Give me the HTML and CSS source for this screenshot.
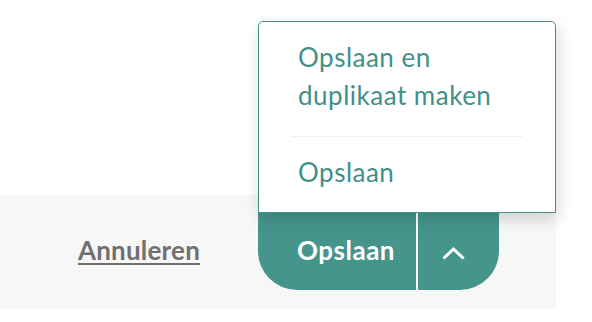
FILE: index.html
```html
<!DOCTYPE html>
<html lang="nl">
<head>
<meta charset="utf-8">
<title>Opslaan</title>
<link rel="stylesheet" href="styles.css">
</head>
<body>
  <div class="content"></div>
  <div class="footer">
    <a class="cancel" href="#">Annuleren</a>
    <div class="split">
      <div class="menu">
        <div class="menu-item">Opslaan en<br>duplikaat maken</div>
        <div class="menu-divider"></div>
        <div class="menu-item">Opslaan</div>
      </div>
      <button class="split-main" type="button">Opslaan</button>
      <span class="split-sep"></span>
      <button class="split-toggle" type="button" aria-label="Meer opties">
        <svg width="24" height="14" viewBox="0 0 24 14" aria-hidden="true">
          <path d="M2.5 11.5 L11.5 3 L20.5 11.5" fill="none" stroke="#ffffff" stroke-width="3" stroke-linecap="square" stroke-linejoin="miter"/>
        </svg>
      </button>
    </div>
  </div>
</body>
</html>
```
FILE: styles.css
```css
html, body {
  margin: 0;
  padding: 0;
  background: #ffffff;
}

body {
  font-family: "Lato", "Liberation Sans", sans-serif;
}

.content {
  height: 195px;
}

.footer {
  width: 556px;
  box-sizing: border-box;
  background: #f7f7f7;
  display: flex;
  justify-content: flex-end;
  align-items: center;
  gap: 58px;
  padding: 18px 57px 19px 0;
}

.cancel {
  font-size: 26px;
  font-weight: 700;
  letter-spacing: 0.2px;
  color: #707070;
  text-decoration: underline;
  text-decoration-thickness: 2px;
  text-underline-offset: 3px;
  margin-top: -4px;
}

.split {
  position: relative;
  display: flex;
  height: 77px;
}

.split-main,
.split-toggle {
  border: 0;
  margin: 0;
  background: #45958d;
  color: #ffffff;
  font-family: inherit;
  cursor: pointer;
  display: flex;
  align-items: center;
}

.split-main {
  width: 158px;
  box-sizing: border-box;
  padding: 0 0 4px 39px;
  font-size: 26px;
  font-weight: 700;
  letter-spacing: 0.5px;
  border-bottom-left-radius: 39px;
}

.split-sep {
  width: 2px;
  background: #ffffff;
}

.split-toggle {
  width: 81px;
  box-sizing: border-box;
  padding: 2px 0 0 24px;
  border-bottom-right-radius: 39px;
}

.menu {
  position: absolute;
  left: 0;
  bottom: 100%;
  width: 298px;
  box-sizing: border-box;
  background: #ffffff;
  border: 1px solid #449089;
  border-radius: 5px 5px 0 0;
  box-shadow: 2px 6px 16px rgba(0, 0, 0, 0.16);
  z-index: 2;
}

.menu-item {
  font-size: 26px;
  line-height: 38px;
  letter-spacing: 0.5px;
  color: #3f9088;
  padding: 16px 20px 22px 39px;
}

.menu-item:last-child {
  padding-bottom: 21px;
}

.menu-divider {
  height: 1px;
  background: #f0f0f0;
  margin: 0 32px 0 32px;
}
```
